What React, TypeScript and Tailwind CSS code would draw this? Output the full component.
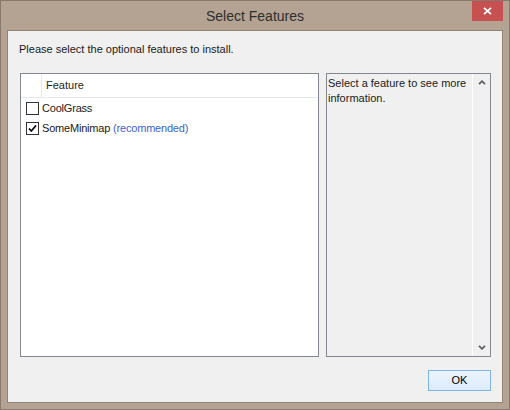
import React from "react";

function Check({ checked }: { checked: boolean }) {
  return (
    <div className="w-[13px] h-[13px] border border-[#333333] bg-white flex items-center justify-center shrink-0">
      {checked && (
        <svg width="9" height="9" viewBox="0 0 9 9">
          <path d="M1 4.5 L3.3 7 L8 1.5" fill="none" stroke="#000" strokeWidth="1.7" />
        </svg>
      )}
    </div>
  );
}

export default function App() {
  return (
    <div className="w-[510px] h-[410px] bg-[#b4a392] border border-[#877a6c] flex flex-col px-[6px] pb-[6px] font-['Liberation_Sans',Arial,sans-serif] text-[11px] text-[#1a1a1a]">
      <div className="relative h-[29px] flex items-center justify-center">
        <span className="text-[14px] text-[#2e2e2e] leading-[16px]">Select Features</span>
        <div className="absolute top-0 right-0 w-[31px] h-[20px] bg-[#c75050] flex items-center justify-center">
          <svg width="9" height="8" viewBox="0 0 9 8">
            <path d="M1 0.8 L8 7.2 M8 0.8 L1 7.2" stroke="#fff" strokeWidth="1.8" />
          </svg>
        </div>
      </div>
      <div className="flex-1 border border-[#918474] bg-[#f0f0f0] flex flex-col">
        <div className="mt-[11px] ml-[11px] leading-[15px]">Please select the optional features to install.</div>
        <div className="mt-[16px] ml-[12px] mr-[11px] h-[284px] flex gap-[7px]">
          <div className="w-[299px] border border-[#828790] bg-white flex flex-col">
            <div className="h-[24px] border-b border-[#e5e8ec] flex">
              <div className="w-[21px] border-r border-[#e5e8ec]" />
              <div className="pl-[4px] flex items-center text-[#1e1e1e]">Feature</div>
            </div>
            <div className="h-[20px] flex items-center pl-[5px]">
              <Check checked={false} />
              <span className="ml-[3px] tracking-[-0.2px]">CoolGrass</span>
            </div>
            <div className="h-[20px] flex items-center pl-[5px]">
              <Check checked={true} />
              <span className="ml-[3px] tracking-[-0.2px]">SomeMinimap</span>
              <span className="ml-[3px] tracking-[-0.2px] text-[#3f5fd4]">(recommended)</span>
            </div>
          </div>
          <div className="w-[165px] border border-[#828790] bg-[#f0f0f0] flex">
            <div className="flex-1 pl-[1px] pt-[2px] leading-[15px]">Select a feature to see more information.</div>
            <div className="w-[18px] border-l border-white flex flex-col items-center justify-between pt-[6px] pb-[6px]">
              <svg width="8" height="5" viewBox="0 0 8 5">
                <path d="M1 4.2 L4 1.2 L7 4.2" fill="none" stroke="#606060" strokeWidth="1.8" />
              </svg>
              <svg width="8" height="5" viewBox="0 0 8 5">
                <path d="M1 0.8 L4 3.8 L7 0.8" fill="none" stroke="#606060" strokeWidth="1.8" />
              </svg>
            </div>
          </div>
        </div>
        <div className="mt-[13px] mr-[11px] flex justify-end">
          <div className="w-[63px] h-[21px] border border-[#7eb4ea] bg-gradient-to-b from-[#ecf4fc] to-[#dcecfc] flex items-center justify-center text-black">
            OK
          </div>
        </div>
      </div>
    </div>
  );
}
